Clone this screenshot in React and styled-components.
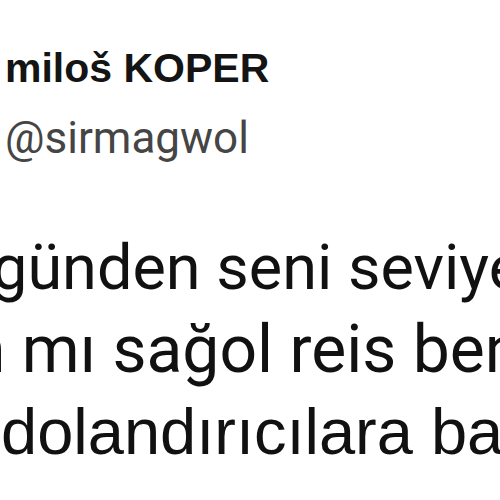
import styled, { createGlobalStyle } from "styled-components";

const GlobalStyle = createGlobalStyle`
  html, body {
    margin: 0;
    padding: 0;
    background: #ffffff;
  }
`;

export default function App() {
  return (
    <>
      <GlobalStyle />
      <Page>
        <Header>
          <Name>miloš KOPER</Name>
          <Handle>@sirmagwol</Handle>
        </Header>
        <Body>
          <Line $offset={-8}>günden seni seviyem</Line>
          <Line $offset={-31} $size={66}>
            n mı sağol reis beni
          </Line>
          <Line $offset={1} $size={65} $alt>
            dolandırıcılara bağlama
          </Line>
        </Body>
      </Page>
    </>
  );
}

const Page = styled.div`
  width: 500px;
  height: 500px;
  overflow: hidden;
  background: #ffffff;
  color: #111111;
`;

const Header = styled.div`
  display: flex;
  flex-direction: column;
  gap: 27px;
  padding: 48px 0 0 5px;
`;

const Name = styled.div`
  font-family: "Liberation Sans", Arial, sans-serif;
  font-weight: 700;
  font-size: 41px;
  line-height: 41px;
  color: #141414;
  white-space: nowrap;
`;

const Handle = styled.div`
  font-family: Roboto, "Liberation Sans", sans-serif;
  font-size: 44px;
  line-height: 44px;
  color: #454545;
  white-space: nowrap;
`;

const Body = styled.div`
  display: flex;
  flex-direction: column;
  margin-top: 67px;
`;

const Line = styled.div`
  font-family: ${(p) =>
    p.$alt ? `"Liberation Sans", Arial, sans-serif` : `Roboto, sans-serif`};
  font-size: ${(p) => p.$size || 63}px;
  line-height: 82px;
  color: #111111;
  white-space: nowrap;
  margin-left: ${(p) => p.$offset}px;
`;
